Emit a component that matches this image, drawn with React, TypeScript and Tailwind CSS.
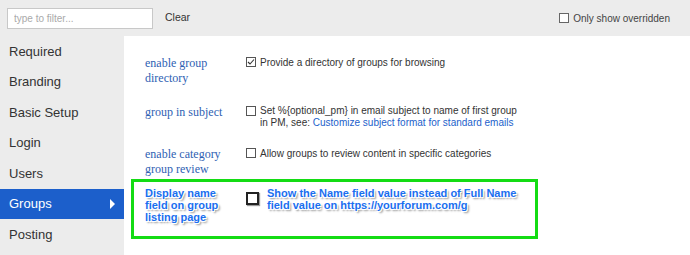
const navItems = ["Required", "Branding", "Basic Setup", "Login", "Users", "Groups", "Posting"];

function Check({ checked }: { checked?: boolean }) {
  return (
    <span className="mt-[1px] mr-[4px] flex h-[10px] w-[10px] shrink-0 items-center justify-center border border-[#555] bg-white">
      {checked && (
        <svg width="8" height="8" viewBox="0 0 8 8">
          <path d="M1 4 L3 6 L7 1.5" fill="none" stroke="#333" strokeWidth="1.1" />
        </svg>
      )}
    </span>
  );
}

export default function App() {
  return (
    <div className="h-[255px] w-[690px] overflow-hidden bg-white font-['Liberation_Sans',Arial,sans-serif] text-[10px] text-[#333]">
      {/* top filter bar */}
      <div className="flex h-[36px] items-center bg-[#ececec] pl-[7px] pr-[20px]">
        <input
          placeholder="type to filter..."
          className="h-[21px] w-[146px] border border-[#c8c8c8] bg-white px-[6px] text-[10px] placeholder:text-[#aaa] outline-none"
        />
        <span className="ml-[12px] text-[10.5px] text-[#333]">Clear</span>
        <label className="ml-auto flex items-center gap-[4px] text-[10px] text-[#444]">
          <span className="h-[10px] w-[10px] border border-[#666] bg-white" />
          Only show overridden
        </label>
      </div>

      <div className="flex">
        {/* sidebar */}
        <nav className="h-[219px] w-[124px] shrink-0 bg-[#ececec]">
          {navItems.map((item) => (
            <div
              key={item}
              className={
                item === "Groups"
                  ? "flex h-[30.5px] items-center justify-between bg-[#1c5fcb] pl-[9px] pr-[9px] text-[13px] text-white"
                  : "flex h-[30.5px] items-center pl-[9px] text-[13px] text-[#333]"
              }
            >
              {item}
              {item === "Groups" && (
                <svg width="5" height="10" viewBox="0 0 5 10">
                  <path d="M0 0 L5 5 L0 10 Z" fill="white" />
                </svg>
              )}
            </div>
          ))}
        </nav>

        {/* settings list */}
        <main className="flex-1 pl-[7px] pt-[20px]">
          <div className="flex h-[49px] pl-[14px]">
            <div className="w-[101px] shrink-0 font-['Liberation_Serif',serif] text-[12px] leading-[15px] text-[#2f5fb3]">
              enable group
              <br />
              directory
            </div>
            <div className="flex leading-[13px]">
              <Check checked />
              Provide a directory of groups for browsing
            </div>
          </div>

          <div className="flex h-[42px] pl-[14px]">
            <div className="w-[101px] shrink-0 font-['Liberation_Serif',serif] text-[12px] leading-[15px] text-[#2f5fb3]">
              group in subject
            </div>
            <div className="flex leading-[12px]">
              <Check />
              <span>
                Set %{"{optional_pm}"} in email subject to name of first group
                <br />
                in PM, see: <span className="text-[#1c5fcb]">Customize subject format for standard emails</span>
              </span>
            </div>
          </div>

          <div className="flex h-[32px] pl-[14px]">
            <div className="w-[101px] shrink-0 font-['Liberation_Serif',serif] text-[12px] leading-[15px] text-[#2f5fb3]">
              enable category
              <br />
              group review
            </div>
            <div className="flex leading-[13px]">
              <Check />
              Allow groups to review content in specific categories
            </div>
          </div>

          <div className="flex h-[60px] w-[407px] border-[3px] border-[#14dc14] pl-[11px] pt-[5px] text-[11px] font-bold leading-[12px] text-[#1a6ff0] [text-shadow:1px_1px_0_#fff,-1px_-1px_0_#fff,1px_-1px_0_#fff,-1px_1px_0_#fff,2px_2px_2px_#888]">
            <div className="w-[101px] shrink-0">
              Display name
              <br />
              field on group
              <br />
              listing page
            </div>
            <span className="mt-[5px] mr-[8px] h-[13px] w-[13px] shrink-0 border-2 border-[#222] bg-white [box-shadow:1px_1px_1px_#999]" />
            <div>
              Show the Name field value instead of Full Name
              <br />
              field value on https://yourforum.com/g
            </div>
          </div>
        </main>
      </div>
    </div>
  );
}
